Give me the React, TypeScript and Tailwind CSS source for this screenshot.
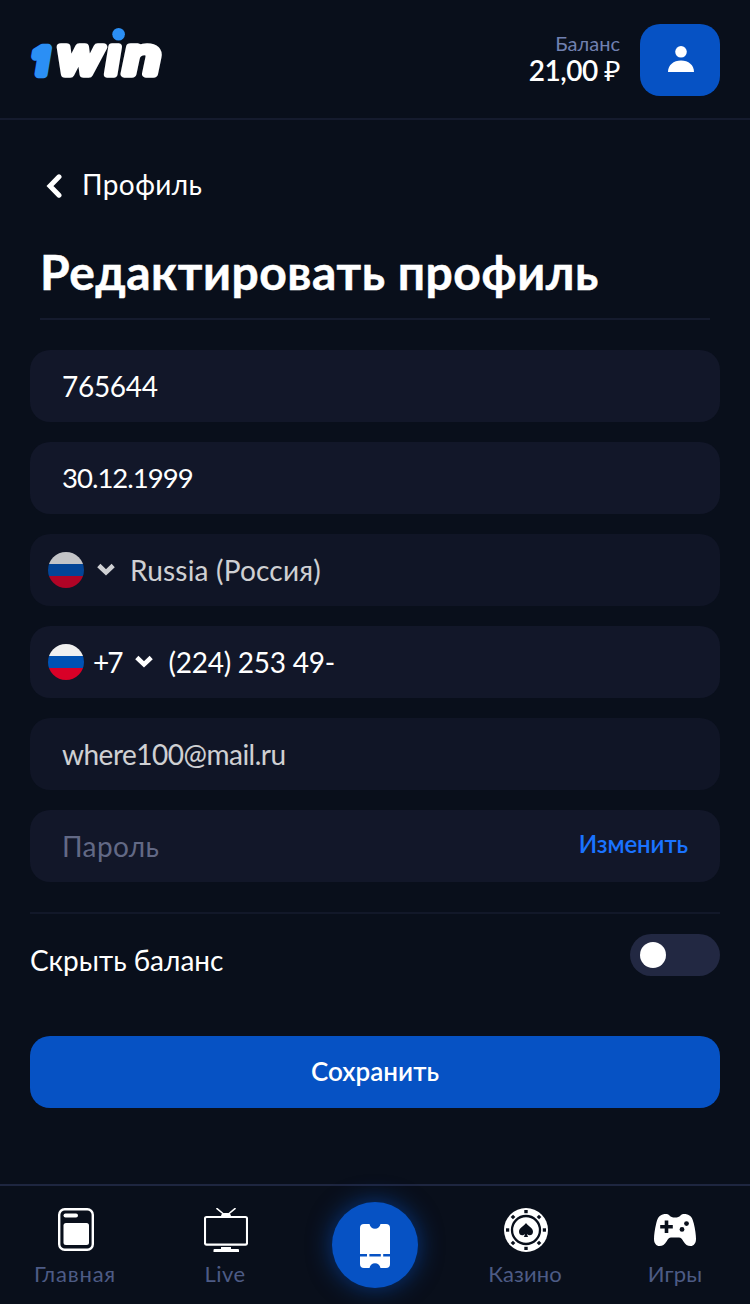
import type { ReactNode } from 'react';

function Logo() {
  return (
    <svg width="144" height="84" viewBox="26 14 144 84" className="-mt-2.5 -ml-1" aria-label="1win">
      <g fontFamily="Inter, sans-serif" fontWeight="600" fontStyle="italic" strokeLinejoin="round" strokeLinecap="round" fontSize="49">
        <text x="32.500" y="74" fontSize="36" fill="#2b8ff5" stroke="#2b8ff5" strokeWidth="8.500">1</text>
        <g fill="#fff" stroke="#fff" strokeWidth="7.500">
          <text x="56.500" y="74" fontWeight="400" textLength="46" lengthAdjust="spacingAndGlyphs">w</text>
          <text x="106.500" y="74">ı</text>
          <text x="123.500" y="74" fontWeight="500" textLength="37" lengthAdjust="spacingAndGlyphs">n</text>
        </g>
      </g>
      <circle cx="118.6" cy="34.2" r="6.3" fill="#2b8ff5" />
    </svg>
  );
}

function Flag() {
  return (
    <span className="flex h-9 w-9 shrink-0 flex-col overflow-hidden rounded-full">
      <span className="h-3 bg-[#f0f0f0]" />
      <span className="h-3 bg-[#0052b4]" />
      <span className="h-3 bg-[#d80027]" />
    </span>
  );
}

function Chevron() {
  return (
    <svg width="18" height="13" viewBox="0 0 18 13" fill="none" stroke="#fff" strokeWidth="4.600" className="-mt-0.5">
      <path d="M1.800 2.500 9 9.400l7.200-6.900" />
    </svg>
  );
}

function Field({ children, disabled = false }: { children: ReactNode; disabled?: boolean }) {
  return (
    <div className={`flex h-[72px] items-center rounded-[20px] text-[28px] leading-9 ${disabled ? 'bg-[#101526]' : 'bg-[#121729]'}`}>
      {children}
    </div>
  );
}

function HomeIcon() {
  return (
    <svg width="44" height="44" viewBox="0 0 44 44">
      <rect x="5.2" y="1.2" width="33.6" height="40.6" rx="5.5" fill="none" stroke="#fff" strokeWidth="2.4" />
      <rect x="9.5" y="5.5" width="14.5" height="4" rx="2" fill="#fff" />
      <rect x="9.5" y="15" width="25.5" height="22" rx="2.5" fill="#fff" />
    </svg>
  );
}

function TvIcon() {
  return (
    <svg width="44" height="44" viewBox="0 0 44 44" fill="#fff">
      <rect x="1" y="9" width="42" height="27.6" rx="1.5" fill="none" stroke="#fff" strokeWidth="2.1" />
      <path d="M13 .6 19.5 6M31 .6 24.5 6" fill="none" stroke="#fff" strokeWidth="1.6" strokeLinecap="round" />
      <path d="M17 8.5c0-2.4 1.6-3.5 3.5-3.5h3c1.900 0 3.500 1.100 3.500 3.500z" />
      <path d="M17 39h10v2h7a1 1 0 0 1 1 1v2H9.500v-2a1 1 0 0 1 1-1H17z" />
    </svg>
  );
}

function TicketIcon() {
  return (
    <svg width="30" height="44" viewBox="0 0 30 44" fill="#fff" className="mt-0.5">
      <path d="M4 0h5.500c.6 2.800 2.700 4.800 5.500 4.800S19.900 2.800 20.500 0H26a4 4 0 0 1 4 4v26H0V4a4 4 0 0 1 4-4z" />
      <path d="M0 32.500h30V40a4 4 0 0 1-4 4h-5.500c-.6-2.800-2.700-4.800-5.500-4.800S10.100 41.200 9.500 44H4a4 4 0 0 1-4-4z" />
      <path d="M7 29h2.400v4H7zM20.800 29h2.400v4h-2.400z" />
    </svg>
  );
}

const chipMarks = [0, 45, 90, 135, 180, 225, 270, 315];

function ChipIcon() {
  return (
    <svg width="44" height="44" viewBox="0 0 44 44">
      <circle cx="22" cy="22" r="22" fill="#fff" />
      {chipMarks.map((a) => (
        <rect key={a} x="20.300" y="2" width="3.400" height="3.200" fill="#090f1b" transform={`rotate(${a} 22 22)`} />
      ))}
      <circle cx="22" cy="22" r="14" fill="none" stroke="#090f1b" strokeWidth="2.300" />
      <path d="M22 15c1.700 2.600 7 4.900 7 8.700 0 3.800-4 4.500-5.800 2.300.1 1.400.4 2.200 1.100 3h-4.600c.7-.8 1-1.600 1.100-3-1.800 2.200-5.800 1.500-5.800-2.300 0-3.800 5.300-6.100 7-8.700z" fill="#090f1b" />
    </svg>
  );
}

function GamepadIcon() {
  return (
    <svg width="44" height="44" viewBox="0 0 44 44" className="-ml-0.5">
      <path
        d="M10.500 6.200c2.500-.6 4.500-.2 6 1.200 1.400 1.400 2.800 2.100 5.500 2.100s4.100-.7 5.500-2.100c1.500-1.400 3.500-1.800 6-1.200 4.600 1 6 4 7.300 9.400 1.400 5.900 2.200 11.500 2.200 15.400 0 4.300-2.200 7-5.500 7-3.200 0-5-1.600-7-4.600-1.500-2.200-2.600-3.900-4.500-3.900h-8c-1.900 0-3 1.700-4.500 3.900-2 3-3.800 4.600-7 4.600C3.200 38 1 35.300 1 31c0-3.900.8-9.500 2.200-15.400 1.300-5.400 2.700-8.400 7.300-9.400z"
        fill="#fff"
      />
      <path d="M13.500 12.500v12.500M7.200 18.700h12.600" stroke="#090f1b" strokeWidth="3.600" />
      <circle cx="33.500" cy="15.600" r="2.400" fill="#090f1b" />
      <circle cx="29" cy="21.400" r="2.400" fill="#090f1b" />
    </svg>
  );
}

function NavItem({ icon, label, spacing }: { icon: ReactNode; label: string; spacing: string }) {
  return (
    <a className="flex flex-1 flex-col items-center pt-[22px]">
      <span className="ml-0.5">{icon}</span>
      <span className={`mt-2 text-[22px] leading-7 text-[#4d5b85] ${spacing}`}>{label}</span>
    </a>
  );
}

export default function App() {
  return (
    <div className="flex h-[1304px] w-[750px] flex-col bg-[#090f1b] font-['Lato','Noto_Sans',sans-serif] text-white">
      <header className="flex h-[120px] items-start justify-between border-b-2 border-[#151b2e] px-[30px] pt-6">
        <Logo />
        <div className="flex">
          <div className="mr-5 pt-[7px] text-right">
            <div className="text-[20px] leading-6 text-[#7080b0]">Баланс</div>
            <div className="text-[28px] leading-[30px] font-semibold tracking-[-0.5px]">
              21,00 <span className="font-normal">₽</span>
            </div>
          </div>
          <button className="flex h-[72px] w-20 items-center justify-center rounded-[20px] bg-[#0652c4]">
            <svg width="26" height="26" viewBox="0 0 26 26" fill="#fff" className="ml-0.5 -mt-0.5">
              <circle cx="13" cy="5.800" r="5.800" />
              <path d="M0 26c0-7 5.500-11.500 13-11.500S26 19 26 26z" />
            </svg>
          </button>
        </div>
      </header>

      <main className="flex-1 px-[30px]">
        <a className="flex items-center pt-[46px] pl-4">
          <svg width="16" height="24" viewBox="0 0 16 24" fill="none" stroke="#fff" strokeWidth="5" strokeLinecap="round" className="mt-[3px]">
            <path d="M13 2.800 4 12l9 9.200" />
          </svg>
          <span className="ml-5 text-[28px] leading-9 tracking-[0.4px]">Профиль</span>
        </a>
        <h1 className="mx-2.5 mt-9 h-[82px] border-b-2 border-[#151b2e] text-[48px] leading-[68px] font-bold tracking-[0.55px] whitespace-nowrap [-webkit-text-stroke:0.5px_#fff]">
          Редактировать профиль
        </h1>

        <form className="mt-[30px] flex flex-col gap-5">
          <Field>
            <span className="pl-8 tracking-[-0.3px]">765644</span>
          </Field>
          <Field>
            <span className="pl-8 text-[27.5px] tracking-[-1px]">30.12.1999</span>
          </Field>
          <Field disabled>
            <div className="flex items-center pl-[18px] opacity-80">
              <Flag />
              <span className="ml-[13px]"><Chevron /></span>
              <span className="ml-[15px] tracking-[0.2px]">Russia (Россия)</span>
            </div>
          </Field>
          <Field>
            <div className="flex items-center pl-[18px]">
              <Flag />
              <span className="ml-[9px] tracking-[-2px]">+7</span>
              <span className="ml-3.5"><Chevron /></span>
              <span className="ml-[15px] tracking-[-0.25px]">(224) 253 49-</span>
            </div>
          </Field>
          <Field disabled>
            <span className="pl-8 tracking-[-0.5px] opacity-80">where100@mail.ru</span>
          </Field>
          <Field>
            <span className="flex-1 pl-8 tracking-[0.4px] text-[#626985]">Пароль</span>
            <a className="mr-8 -mt-1 text-[24px] font-semibold tracking-[-0.1px] text-[#1a73ff]">Изменить</a>
          </Field>
        </form>

        <section className="mt-[30px] flex justify-between border-t-2 border-[#121829] pt-5">
          <span className="pt-2 text-[28px] leading-9">Скрыть баланс</span>
          <span className="flex h-[42px] w-[90px] items-center rounded-full bg-[#222842] px-2.5">
            <span className="h-[26px] w-[26px] rounded-full bg-white" />
          </span>
        </section>
        <button className="mt-[58px] h-[72px] w-full rounded-[20px] bg-[#0652c4] pb-0.5 text-[26px] font-semibold">
          Сохранить
        </button>
      </main>

      <nav className="flex h-[120px] border-t-2 border-[#1e2640]">
        <NavItem icon={<HomeIcon />} label="Главная" spacing="tracking-[0.8px]" />
        <NavItem icon={<TvIcon />} label="Live" spacing="tracking-[0.4px]" />
        <div className="flex flex-1 justify-center pt-4">
          <button className="flex h-[86px] w-[86px] items-center justify-center rounded-full bg-[#0652c4] shadow-[0_0_24px_rgba(6,82,196,0.6)]">
            <TicketIcon />
          </button>
        </div>
        <NavItem icon={<ChipIcon />} label="Казино" spacing="tracking-[0.1px]" />
        <NavItem icon={<GamepadIcon />} label="Игры" spacing="tracking-[0.2px]" />
      </nav>
    </div>
  );
}
